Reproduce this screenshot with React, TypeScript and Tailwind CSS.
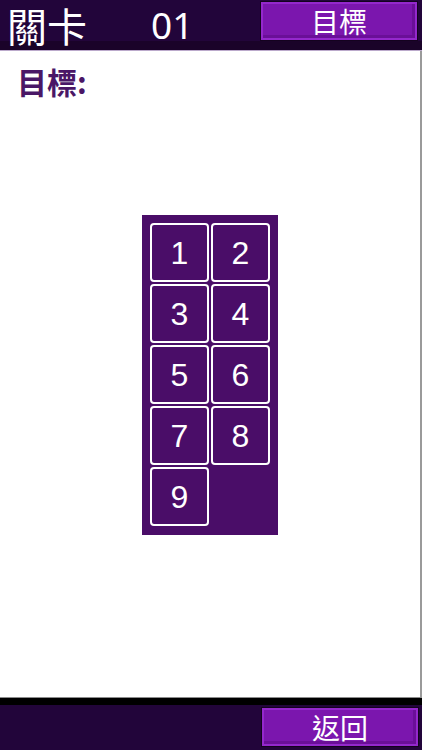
import React from "react";

// ── Shared bits ────────────────────────────────────────────────────────────────
const CJK = "font-['Noto_Sans_CJK_TC','Noto_Sans',sans-serif]";

function PurpleButton({ label }: { label: string }) {
  return (
    <button
      className={`w-[156px] h-[38px] flex items-center justify-center bg-[#7b16ae] border-2 border-[#9428cc] shadow-[0_0_0_1px_#14021f,inset_-3px_-3px_0_#6a0f98] text-white text-[28px] leading-none ${CJK}`}
    >
      {label}
    </button>
  );
}

function Tile({ n }: { n: number }) {
  return (
    <div className="w-[59px] h-[59px] rounded-[4px] border-2 border-white bg-[#4a0d68] flex items-center justify-center text-white text-[32px] font-['Liberation_Sans',sans-serif]">
      {n}
    </div>
  );
}

// ── Main export ────────────────────────────────────────────────────────────────
export default function App() {
  const tiles = [1, 2, 3, 4, 5, 6, 7, 8, 9];

  return (
    <div className="w-[422px] h-[750px] flex flex-col bg-white overflow-hidden">
      {/* Header */}
      <div className="h-[51px] bg-[#22053a] border-b border-[#bba9cb] flex items-center relative">
        <div className="absolute left-0 right-0 bottom-0 h-[9px] bg-[#1a0329]" />
        <span className={`relative ml-[7px] text-white text-[40px] leading-[44px] ${CJK}`}>關卡</span>
        <span className="relative ml-[64px] text-white text-[37px] leading-[44px] font-['Noto_Sans',sans-serif]">01</span>
        <div className="ml-auto mr-[5px] mb-[8px] relative">
          <PurpleButton label="目標" />
        </div>
      </div>

      {/* Content */}
      <div className="flex-1 flex flex-col border-r-2 border-[#9a9a9a] border-b border-b-[#8c8c8c]">
        <div className={`pl-[17px] pt-[10px] text-[30px] font-bold leading-[40px] text-[#4a1766] ${CJK}`}>
          目標:
        </div>
        <div className="flex justify-center mt-[114px]">
          <div className="w-[136px] h-[320px] bg-[#4a0d68] p-[8px] grid grid-cols-[59px_59px] auto-rows-[59px] gap-[2px] content-start">
            {tiles.map(n => (
              <Tile key={n} n={n} />
            ))}
          </div>
        </div>
      </div>

      {/* Footer */}
      <div className="h-[7px] bg-black" />
      <div className="h-[45px] bg-[#22053a] flex items-start justify-end pr-[4px] pt-[3px]">
        <PurpleButton label="返回" />
      </div>
    </div>
  );
}
